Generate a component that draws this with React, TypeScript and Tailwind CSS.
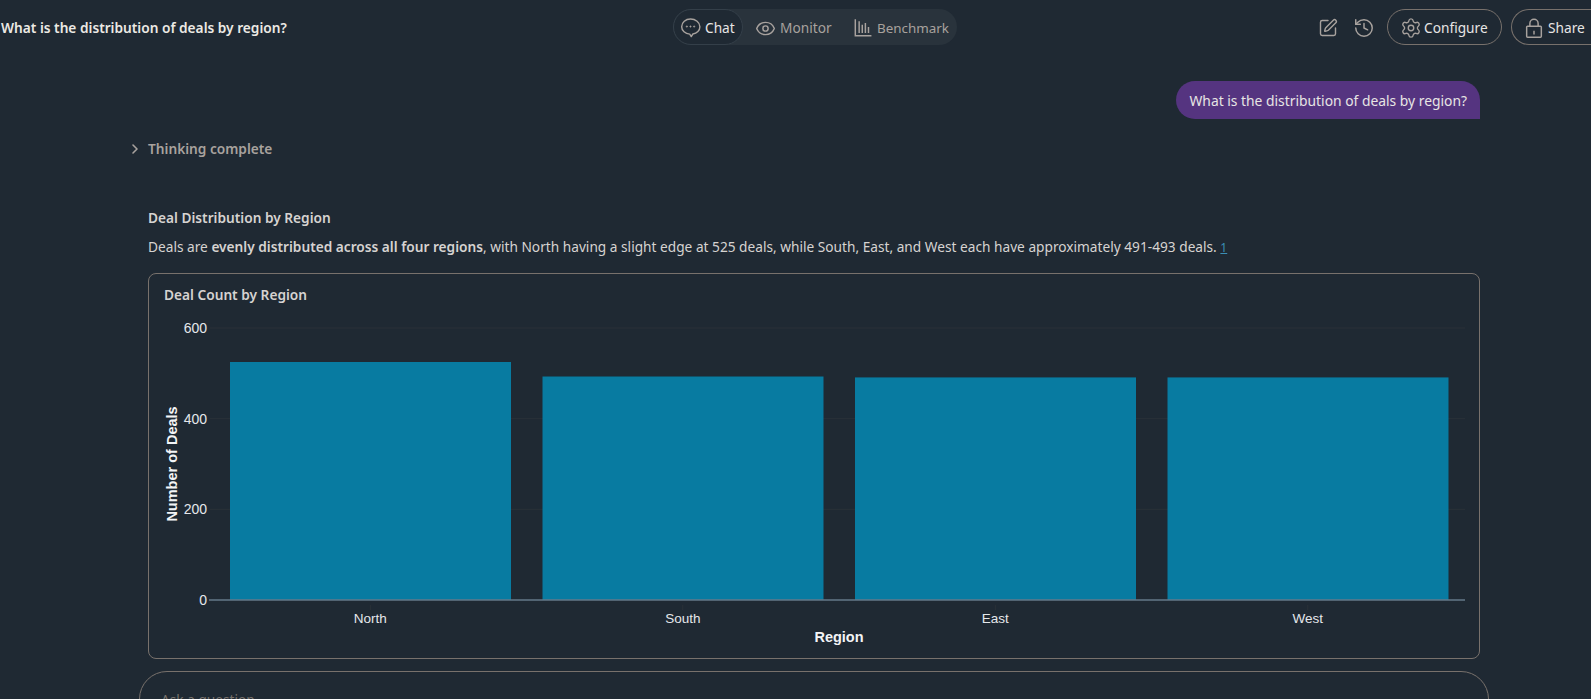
import { ChevronRight, Eye, History, Settings, SquarePen } from 'lucide-react';

const regions = [
  { name: 'North', value: 525 },
  { name: 'South', value: 493 },
  { name: 'East', value: 491 },
  { name: 'West', value: 491 },
];

const ChatIcon = () => (
  <svg width="23" height="23" viewBox="0 0 24 24" fill="none" stroke="#a8a29e" strokeWidth="1.5" strokeLinejoin="round" className="shrink-0">
    <path d="M12 3.2c-5.1 0-9.2 3.5-9.2 7.9 0 4.2 3.7 7.5 8.4 7.8l1.6 2.6 1.7-2.8c4.2-.6 7.3-3.8 7.3-7.6 0-4.4-4.6-7.9-9.8-7.9z" />
    <circle cx="8.2" cy="11" r=".7" fill="#a8a29e" strokeWidth="0.6" />
    <circle cx="12" cy="11" r=".7" fill="#a8a29e" strokeWidth="0.6" />
    <circle cx="15.8" cy="11" r=".7" fill="#a8a29e" strokeWidth="0.6" />
  </svg>
);

const BarsIcon = () => (
  <svg width="22" height="22" viewBox="0 0 24 24" fill="none" stroke="#a8a29e" strokeWidth="1.6" className="shrink-0">
    <path d="M3.6 2.5v18h17.6" />
    <path d="M7.8 4.5v13M11.2 8.5v9M14.6 6.5v11M18 11v6.5" />
  </svg>
);

const LockIcon = () => (
  <svg width="22" height="22" viewBox="0 0 24 24" fill="none" stroke="#a8a29e" strokeWidth="1.6" className="shrink-0">
    <rect x="4" y="10" width="16" height="12" rx="1" />
    <path d="M7.5 10V7a4.5 4.5 0 0 1 9 0v3" />
    <path d="M12 15v4" />
  </svg>
);

const Chart = () => {
  // coordinates are page pixels minus the svg origin (164, 316)
  const plotLeft = 46;
  const plotRight = 1301;
  const top = 12;
  const bottom = 284;
  const y = (v: number) => bottom - (v / 600) * (bottom - top);

  return (
    <svg width="1301" height="335" className="block overflow-visible font-['Liberation_Sans',sans-serif]">
      {[600, 400, 200].map((t) => (
        <line key={t} x1={plotLeft} x2={plotRight} y1={y(t)} y2={y(t)} stroke="#2a3138" strokeWidth="1" />
      ))}
      {regions.map((r, i) => (
        <g key={r.name}>
          <rect x={66 + 312.5 * i} y={y(r.value)} width={281} height={bottom - y(r.value)} fill="#087ba1" />
          <line x1={206.3 + 312.5 * i} x2={206.3 + 312.5 * i} y1={289} y2={294} stroke="#2a3138" strokeWidth="1" />
          <text x={206.3 + 312.5 * i} y={307} fontSize="13.5" fill="#e5e7eb" textAnchor="middle">
            {r.name}
          </text>
        </g>
      ))}
      <line x1={plotLeft - 1} x2={plotRight} y1={bottom} y2={bottom} stroke="#64788a" strokeWidth="1.5" />
      {[600, 400, 200, 0].map((t) => (
        <text key={t} x={43} y={y(t) + 5} fontSize="14" fill="#e5e7eb" textAnchor="end">
          {t}
        </text>
      ))}
      <text x={675} y={326} fontSize="14.5" fontWeight="700" fill="#f3f4f6" textAnchor="middle">
        Region
      </text>
      <text transform="translate(13 148) rotate(-90)" fontSize="14.5" fontWeight="700" fill="#f3f4f6" textAnchor="middle">
        Number of Deals
      </text>
    </svg>
  );
};

export default function App() {
  return (
    <div className="h-[699px] w-[1591px] overflow-hidden bg-[#1f2933] text-[13.7px] leading-[20px] text-[#d6d3d1] font-['Noto_Sans',sans-serif]">
      <header className="flex h-[54px] items-center">
        <div className="w-[673px] shrink-0 pl-px pt-[2px] font-semibold text-[#ece9e4]">What is the distribution of deals by region?</div>
        <div className="flex h-9 w-[284px] shrink-0 items-center rounded-full bg-[#29333c] text-[#a8a29e]">
          <div className="flex h-9 w-[70px] shrink-0 items-center gap-[3px] rounded-full border border-[#343f49] bg-[#1f2933] pl-[5px] pt-px text-[#e7e5e4]">
            <ChatIcon />
            Chat
          </div>
          <div className="flex w-[109px] shrink-0 items-center gap-1 pl-3 pt-[2px]">
            <Eye size={21} strokeWidth={1.7} />
            Monitor
          </div>
          <div className="flex items-center gap-[3px] pt-[2px] text-[13.4px]">
            <BarsIcon />
            Benchmark
          </div>
        </div>
        <div className="flex flex-1 items-center pl-[361px]">
          <SquarePen size={20} strokeWidth={1.7} className="mt-[2px] shrink-0 text-[#a8a29e]" />
          <History size={22} strokeWidth={1.6} className="ml-[15px] mt-[2px] shrink-0 text-[#a8a29e]" />
          <div className="ml-3 flex h-9 w-[115px] shrink-0 items-center gap-[2px] rounded-full border border-[#78716c] pl-3 pt-px text-[#e7e5e4]">
            <Settings size={22} strokeWidth={1.5} className="shrink-0 text-[#a8a29e]" />
            Configure
          </div>
          <div className="ml-[9px] flex h-9 w-[80px] shrink-0 items-center gap-[3px] rounded-l-full border-y border-l border-[#78716c] pl-[11px] pt-px text-[#e7e5e4]">
            <LockIcon />
            Share
          </div>
        </div>
      </header>

      <main className="w-[1360px] pl-[139px]">
        <div className="mt-[27px] flex w-[1341px] justify-end">
          <div className="flex h-[38px] items-center rounded-t-[19px] rounded-bl-[19px] bg-[#553480] px-[13px] pt-px text-[13.85px] text-[#e7e5e4]">
            What is the distribution of deals by region?
          </div>
        </div>
        <div className="mt-[20px] -ml-[12px] flex items-center gap-[5px] font-semibold text-[#a8a29e]">
          <ChevronRight size={16} strokeWidth={2.4} />
          Thinking complete
        </div>
        <div className="pl-[9px]">
          <h3 className="mt-[49px] font-semibold">Deal Distribution by Region</h3>
          <p className="mt-[9px]">
            Deals are <strong className="font-semibold">evenly distributed across all four regions</strong>, with North having a slight edge at 525 deals, while South, East, and West each have approximately 491-493 deals. <span className="text-[12px] text-[#3b8fb5] underline">1</span>
          </p>
          <div className="mt-[15px] h-[386px] w-[1332px] rounded-lg border border-[#78716c] pl-[15px] pt-[11px]">
            <div className="font-semibold">Deal Count by Region</div>
            <div className="mt-[11px]">
              <Chart />
            </div>
          </div>
        </div>
        <div className="mt-[12px] h-[80px] w-[1350px] rounded-[28px] border border-[#78716c] pl-[21px] pt-[18px] text-[#78716c]">
          Ask a question...
        </div>
      </main>
    </div>
  );
}
